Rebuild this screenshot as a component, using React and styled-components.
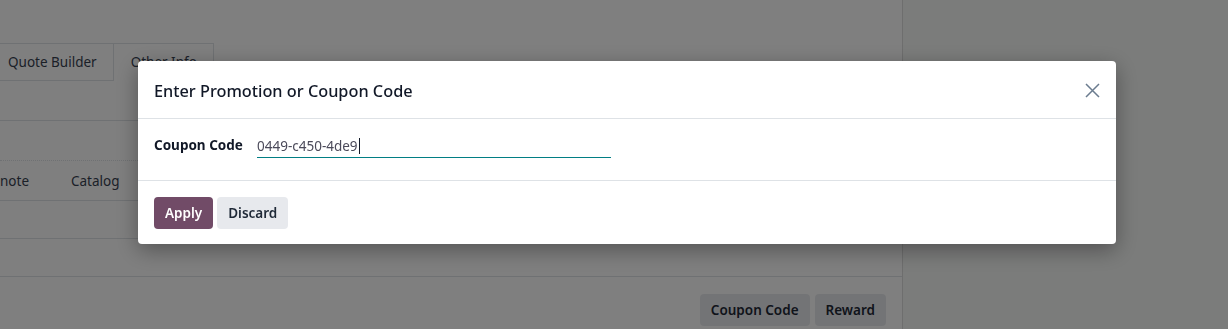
import React from 'react';
import styled, { createGlobalStyle } from 'styled-components';

const GlobalStyle = createGlobalStyle`
  html, body {
    margin: 0;
    padding: 0;
    height: 100%;
    overflow: hidden;
    background: #ffffff;
    font-family: "Noto Sans", "Open Sans", sans-serif;
    font-size: 13.5px;
    color: #374151;
  }
  #root { height: 100%; }
`;

const Page = styled.div`
  display: flex;
  height: 329px;
  overflow: hidden;
`;

const Main = styled.div`
  width: 903px;
  flex-shrink: 0;
  display: flex;
  flex-direction: column;
  border-right: 1px solid #dcdcdc;
  padding-top: 43px;
  box-sizing: border-box;
`;

const Side = styled.div`
  flex: 1;
  background: #f7f8f7;
`;

const TabBar = styled.div`
  display: flex;
  height: 38px;
`;

const Tab = styled.div`
  display: flex;
  align-items: center;
  padding: 0 16px 0 ${({ $first }) => ($first ? '8px' : '17px')};
  border-top: 1px solid #dee2e6;
  border-right: 1px solid #dee2e6;
  border-bottom: 1px solid ${({ $active }) => ($active ? '#dee2e6' : 'transparent')};
  color: #374151;
`;

const TabFill = styled.div`
  flex: 1;
`;

const Row = styled.div`
  height: ${({ $h }) => $h}px;
  border-bottom: 1px ${({ $dotted }) => ($dotted ? 'dotted' : 'solid')} #dee2e6;
  display: flex;
  align-items: center;
  box-sizing: border-box;
`;

const InnerTab = styled.div`
  margin-left: ${({ $ml }) => $ml}px;
  color: #374151;
`;

const Actions = styled.div`
  display: flex;
  justify-content: flex-end;
  gap: 5px;
  padding: 17px 16px 0 0;
`;

const Button = styled.button`
  font-family: inherit;
  font-size: 13.5px;
  font-weight: 600;
  height: 32px;
  padding: 0 ${({ $px }) => $px || 10}px;
  border: none;
  border-radius: 4px;
  background: ${({ $primary }) => ($primary ? '#714b67' : '#e7e9ed')};
  color: ${({ $primary }) => ($primary ? '#ffffff' : '#1f2937')};
  cursor: pointer;
`;

const Backdrop = styled.div`
  position: fixed;
  inset: 0;
  background: rgba(0, 0, 0, 0.5);
`;

const Modal = styled.div`
  position: fixed;
  left: 138px;
  top: 61px;
  width: 978px;
  background: #ffffff;
  border-radius: 4px;
  box-shadow: 0 6px 22px rgba(0, 0, 0, 0.35);
  display: flex;
  flex-direction: column;
`;

const Header = styled.div`
  display: flex;
  align-items: center;
  justify-content: space-between;
  height: 57px;
  padding: 0 16px;
  border-bottom: 1px solid #dee2e6;
`;

const Title = styled.h4`
  margin: 0;
  font-size: 16.3px;
  font-weight: 500;
  color: #111827;
  padding-top: 2px;
`;

const Close = styled.button`
  border: none;
  background: none;
  padding: 0;
  margin-top: 2px;
  display: flex;
  cursor: pointer;
`;

const Body = styled.div`
  display: flex;
  align-items: flex-start;
  height: 62px;
  padding: 0 16px;
  border-bottom: 1px solid #dee2e6;
  box-sizing: border-box;
`;

const Label = styled.label`
  width: 103px;
  flex-shrink: 0;
  font-weight: 700;
  color: #111827;
  padding-top: 17px;
`;

const Field = styled.div`
  width: 354px;
  height: 22px;
  margin-top: 16px;
  border-bottom: 1px solid #017e84;
  display: flex;
  align-items: center;
  color: #4b4a5a;
`;

const Caret = styled.span`
  width: 1px;
  height: 16px;
  background: #111827;
  margin-left: 1px;
`;

const Footer = styled.div`
  display: flex;
  gap: 4px;
  height: 63px;
  padding: 16px;
  box-sizing: border-box;
`;

const CloseIcon = () => (
  <svg width="15" height="15" viewBox="0 0 15 15">
    <path d="M1 1 L14 14 M14 1 L1 14" stroke="#6b7c8f" strokeWidth="1.5" fill="none" />
  </svg>
);

export default function App() {
  return (
    <>
      <GlobalStyle />
      <Page>
        <Main>
          <TabBar>
            <Tab $first $active>Quote Builder</Tab>
            <Tab>Other Info</Tab>
            <TabFill />
          </TabBar>
          <Row $h={40} />
          <Row $h={40} $dotted />
          <Row $h={40}>
            <InnerTab $ml={0}>note</InnerTab>
            <InnerTab $ml={42}>Catalog</InnerTab>
          </Row>
          <Row $h={38} />
          <Row $h={38} />
          <Actions>
            <Button $px={11}>Coupon Code</Button>
            <Button $px={11}>Reward</Button>
          </Actions>
        </Main>
        <Side />
      </Page>
      <Backdrop />
      <Modal role="dialog">
        <Header>
          <Title>Enter Promotion or Coupon Code</Title>
          <Close aria-label="Close"><CloseIcon /></Close>
        </Header>
        <Body>
          <Label>Coupon Code</Label>
          <Field>
            0449-c450-4de9
            <Caret />
          </Field>
        </Body>
        <Footer>
          <Button $primary $px={11}>Apply</Button>
          <Button $px={11}>Discard</Button>
        </Footer>
      </Modal>
    </>
  );
}
